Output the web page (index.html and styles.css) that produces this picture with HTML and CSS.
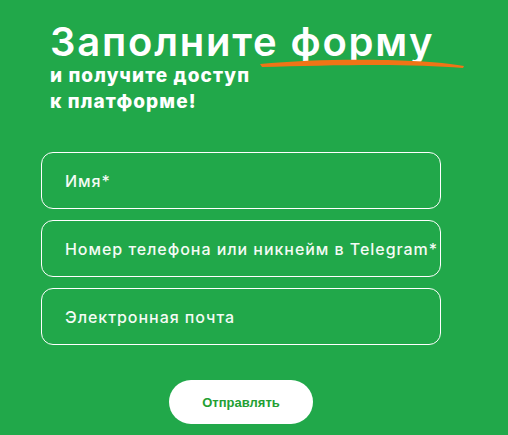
FILE: index.html
```html
<!DOCTYPE html>
<html lang="ru">
<head>
<meta charset="utf-8">
<link rel="stylesheet" href="styles.css">
</head>
<body>
<div class="page">
  <div class="heading">
    <h1 class="title">Заполните форму</h1>
    <svg class="stroke" width="210" height="14" viewBox="0 0 210 14">
      <path d="M2 7 C 40 3, 90 2, 130 3 C 165 4, 190 6, 206 9 L 205 11 C 180 9, 150 8, 120 8 C 80 8, 40 9, 4 10 Z" fill="#f07416"/>
    </svg>
    <p class="subtitle">и получите доступ<br>к платформе!</p>
  </div>
  <form class="form">
    <div class="field"><span class="ph">Имя*</span></div>
    <div class="field"><span class="ph">Номер телефона или никнейм в Telegram*</span></div>
    <div class="field"><span class="ph">Электронная почта</span></div>
    <div class="actions"><button type="button" class="btn">Отправлять</button></div>
  </form>
</div>
</body>
</html>
```

FILE: styles.css
```css
html, body {
  margin: 0;
  padding: 0;
  background: #21a84a;
}
.page {
  width: 508px;
  height: 435px;
  overflow: hidden;
  font-family: Inter, "Noto Sans", sans-serif;
  color: #fff;
}
.heading {
  position: relative;
  padding: 18px 0 0 50px;
}
.title {
  margin: 0;
  font-size: 40px;
  font-weight: 600;
  line-height: 48px;
  letter-spacing: 1.8px;
}
.stroke {
  position: absolute;
  left: 258px;
  top: 57px;
}
.subtitle {
  margin: -3px 0 0;
  font-size: 19px;
  font-weight: 800;
  line-height: 26px;
  letter-spacing: 1.1px;
}
.form {
  margin: 37px 0 0 41px;
  width: 400px;
  display: flex;
  flex-direction: column;
  gap: 11px;
}
.field {
  box-sizing: border-box;
  height: 57px;
  border: 1px solid #fff;
  border-radius: 12px;
  display: flex;
  align-items: center;
  padding: 0 0 0 23px;
  overflow: hidden;
  white-space: nowrap;
}
.ph {
  font-size: 16px;
  font-weight: 500;
  letter-spacing: 0.95px;
  color: #f4fbf5;
}
.actions {
  display: flex;
  justify-content: flex-start;
  padding: 24px 0 0 128px;
}
.btn {
  width: 144px;
  height: 44px;
  border: 0;
  border-radius: 22px;
  background: #fff;
  color: #23a033;
  font-family: "Liberation Sans", Arial, sans-serif;
  font-weight: 700;
  font-size: 13px;
}
```
